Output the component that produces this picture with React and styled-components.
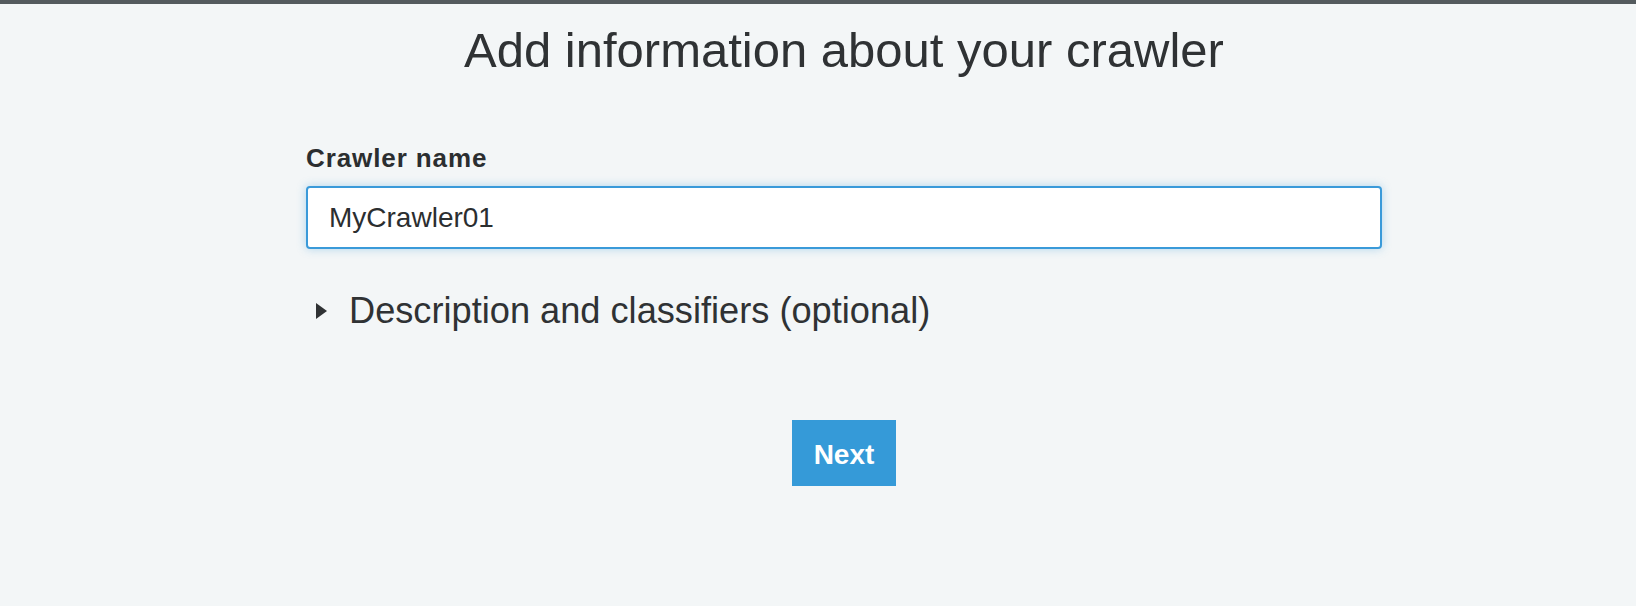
import React from 'react';
import styled, { createGlobalStyle } from 'styled-components';

const GlobalStyle = createGlobalStyle`
  html, body {
    margin: 0;
    padding: 0;
    background: #f3f6f7;
    font-family: "Liberation Sans", Arial, Helvetica, sans-serif;
    color: #2f3234;
  }
`;

const TopBar = styled.div`
  height: 4px;
  background: #545b5e;
`;

const Page = styled.main`
  display: flex;
  flex-direction: column;
  align-items: center;
  padding-left: 52px;
`;

const Title = styled.h1`
  margin: 18px 0 0;
  font-size: 49px;
  line-height: 56px;
  font-weight: 400;
  color: #2f3234;
`;

const Form = styled.form`
  width: 1076px;
  margin-top: 65px;
  display: flex;
  flex-direction: column;
`;

const Label = styled.label`
  font-size: 26px;
  line-height: 30px;
  font-weight: 700;
  letter-spacing: 0.9px;
  color: #2b2e30;
`;

const Input = styled.input`
  box-sizing: border-box;
  margin-top: 13px;
  width: 100%;
  height: 63px;
  padding: 0 21px;
  border: 2px solid #3a9ad9;
  border-radius: 4px;
  background: #fff;
  box-shadow: 0 0 10px rgba(52, 152, 219, 0.35);
  font-family: inherit;
  font-size: 28px;
  color: #2b2e30;
  outline: none;
`;

const Disclosure = styled.div`
  display: flex;
  align-items: center;
  gap: 22px;
  margin-top: 41px;
  padding-left: 10px;
  font-size: 36.2px;
  line-height: 42px;
  color: #2f3234;
  cursor: pointer;
`;

const Caret = () => (
  <svg width="11" height="16" viewBox="0 0 11 16">
    <path d="M0 0 L11 8 L0 16 Z" fill="#2f3234" />
  </svg>
);

const Actions = styled.div`
  display: flex;
  justify-content: center;
  margin-top: 88px;
`;

const Button = styled.button`
  box-sizing: border-box;
  width: 104px;
  height: 66px;
  padding: 4px 0 0;
  border: none;
  background: #359ad8;
  color: #fff;
  font-family: inherit;
  font-size: 28px;
  font-weight: 700;
  cursor: pointer;
`;

const App = () => {
  return (
    <>
      <GlobalStyle />
      <TopBar />
      <Page>
        <Title>Add information about your crawler</Title>
        <Form onSubmit={(e) => e.preventDefault()}>
          <Label htmlFor="crawler-name">Crawler name</Label>
          <Input id="crawler-name" defaultValue="MyCrawler01" />
          <Disclosure>
            <Caret />
            <span>Description and classifiers (optional)</span>
          </Disclosure>
          <Actions>
            <Button type="submit">Next</Button>
          </Actions>
        </Form>
      </Page>
    </>
  );
};

export default App;
